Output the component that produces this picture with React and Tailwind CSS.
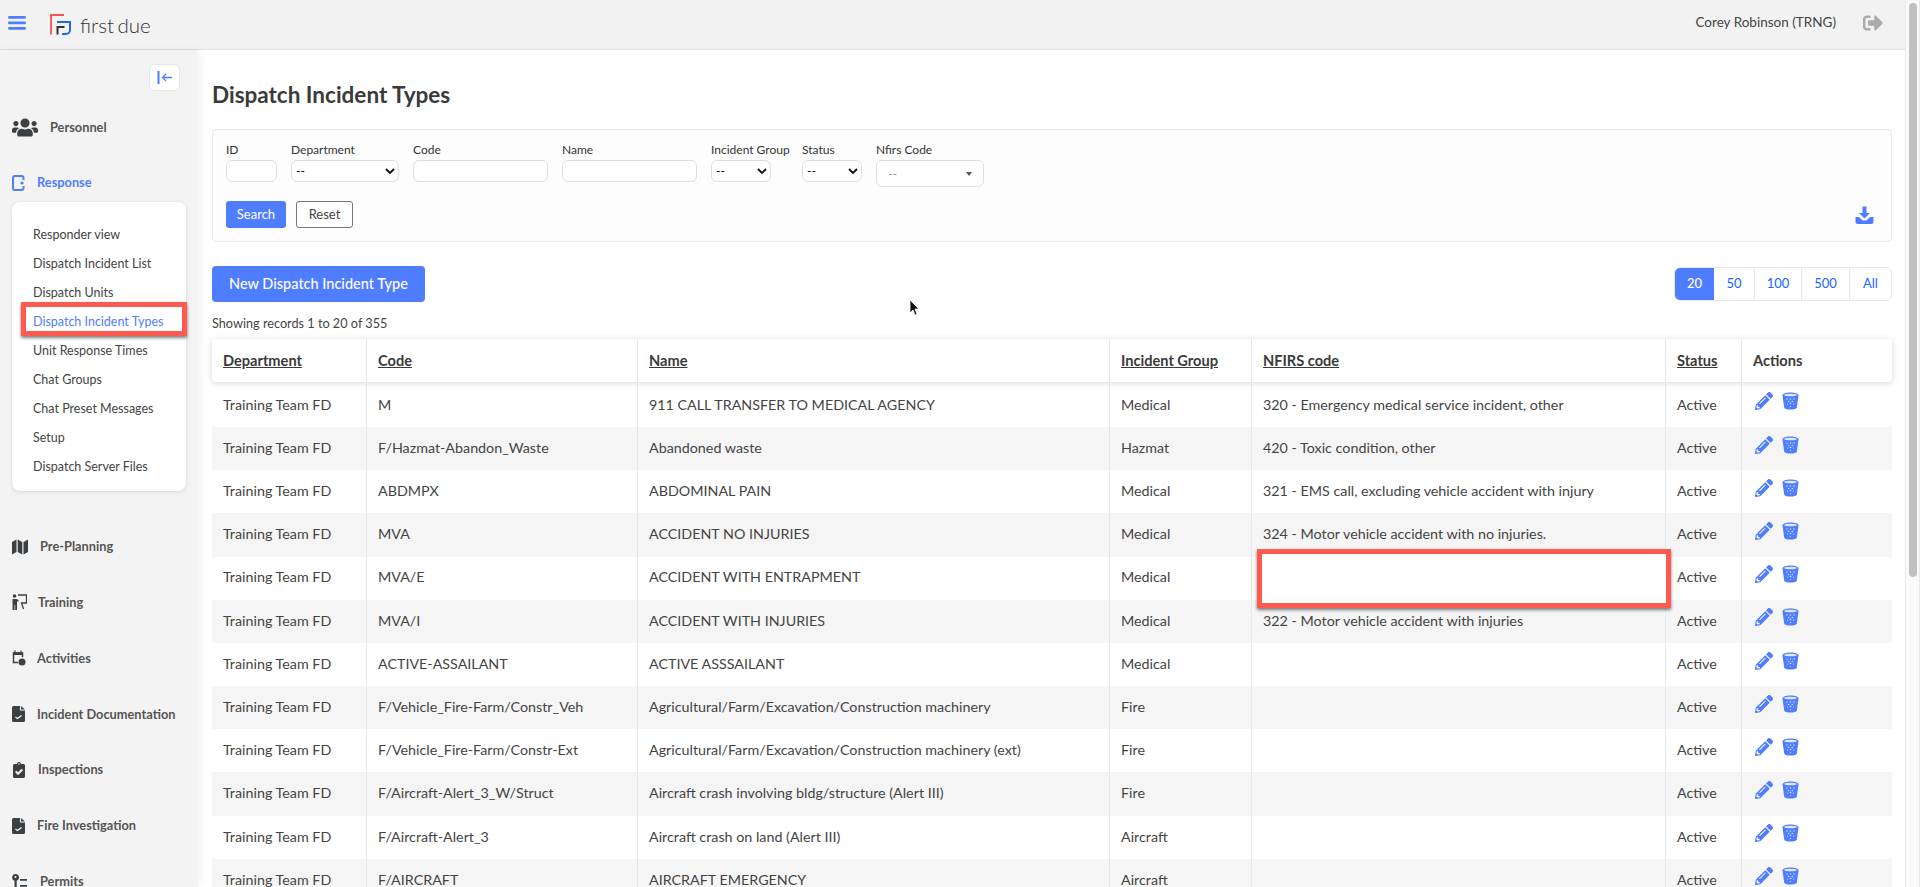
import { FaUsers, FaClipboardCheck, FaPencilAlt, FaSignOutAlt } from 'react-icons/fa';

const rows = [
  ['M', '911 CALL TRANSFER TO MEDICAL AGENCY', 'Medical', '320 - Emergency medical service incident, other'],
  ['F/Hazmat-Abandon_Waste', 'Abandoned waste', 'Hazmat', '420 - Toxic condition, other'],
  ['ABDMPX', 'ABDOMINAL PAIN', 'Medical', '321 - EMS call, excluding vehicle accident with injury'],
  ['MVA', 'ACCIDENT NO INJURIES', 'Medical', '324 - Motor vehicle accident with no injuries.'],
  ['MVA/E', 'ACCIDENT WITH ENTRAPMENT', 'Medical', ''],
  ['MVA/I', 'ACCIDENT WITH INJURIES', 'Medical', '322 - Motor vehicle accident with injuries'],
  ['ACTIVE-ASSAILANT', 'ACTIVE ASSSAILANT', 'Medical', ''],
  ['F/Vehicle_Fire-Farm/Constr_Veh', 'Agricultural/Farm/Excavation/Construction machinery', 'Fire', ''],
  ['F/Vehicle_Fire-Farm/Constr-Ext', 'Agricultural/Farm/Excavation/Construction machinery (ext)', 'Fire', ''],
  ['F/Aircraft-Alert_3_W/Struct', 'Aircraft crash involving bldg/structure (Alert III)', 'Fire', ''],
  ['F/Aircraft-Alert_3', 'Aircraft crash on land (Alert III)', 'Aircraft', ''],
  ['F/AIRCRAFT', 'AIRCRAFT EMERGENCY', 'Aircraft', ''],
];

const subItems = [
  'Responder view',
  'Dispatch Incident List',
  'Dispatch Units',
  'Dispatch Incident Types',
  'Unit Response Times',
  'Chat Groups',
  'Chat Preset Messages',
  'Setup',
  'Dispatch Server Files',
];

const columns = 'grid grid-cols-[155px_271px_472px_142px_414px_76px_150px]';

const Logo = () => (
  <svg width="21" height="21" viewBox="0 0 21 21" fill="none">
    <path d="M1 20.500V1h13" stroke="#f4525a" strokeWidth="1.800" />
    <path d="M7 8h13v8a4 4 0 0 1-4 4h-4" stroke="#2563eb" strokeWidth="2" />
    <path d="M7.500 20.500V13h7" stroke="#2f343b" strokeWidth="2" />
  </svg>
);

const MenuIcon = () => (
  <svg width="18" height="14" viewBox="0 0 18 14" fill="#4f7dff">
    <rect y="0" width="18" height="2.800" rx="1.400" />
    <rect y="5.500" width="18" height="2.800" rx="1.400" />
    <rect y="11" width="18" height="2.800" rx="1.400" />
  </svg>
);

const ResponseIcon = () => (
  <svg width="14" height="16" viewBox="0 0 14 16" fill="none">
    <rect x="1" y="1" width="10.500" height="14" rx="2" stroke="#4f7dff" strokeWidth="2" />
    <rect x="9" y="5" width="5" height="6" fill="#f3f3f3" />
    <circle cx="10" cy="8" r="1.600" fill="#4f7dff" />
  </svg>
);

const MapIcon = () => (
  <svg width="16" height="16" viewBox="0 0 16 16" fill="#3d4043">
    <path d="M0 3l4.500-2.500V13L0 15.500zM5.700 0.500L10.300 3v12.500L5.700 13zM11.500 3L16 0.500V13l-4.500 2.500z" />
  </svg>
);

const TrainingIcon = () => (
  <svg width="15" height="16" viewBox="0 0 15 16" fill="#3d4043">
    <circle cx="2.500" cy="2" r="1.800" />
    <path d="M0.500 5h4l2 1v1.500H5V16H3.200v-5H2.500v5H0.500z" />
    <path d="M6 1h8.500v8H9.500l2 6" fill="none" stroke="#3d4043" strokeWidth="1.300" />
  </svg>
);

const FileCheckIcon = () => (
  <svg width="13" height="16" viewBox="0 0 13 16">
    <path d="M1.500 0H8v4.500h5v10a1.500 1.500 0 0 1-1.500 1.500h-10A1.500 1.500 0 0 1 0 14.500V1.500A1.500 1.500 0 0 1 1.500 0zM9 0l4 3.500H9z" fill="#3d4043" />
    <path d="M3.500 11l2 1.500 4-3" stroke="#fff" strokeWidth="1.200" fill="none" />
  </svg>
);

const CalendarDotIcon = () => (
  <svg width="14" height="16" viewBox="0 0 14 16" fill="none">
    <path d="M6 12.500H1.500V3h9v4" stroke="#3d4043" strokeWidth="1.500" />
    <path d="M1 2.500h10V5H1z" fill="#3d4043" />
    <path d="M3 0.500v2M9 0.500v2" stroke="#3d4043" strokeWidth="1.300" />
    <circle cx="10" cy="12" r="3.500" fill="#3d4043" />
  </svg>
);

const PermitIcon = () => (
  <svg width="16" height="15" viewBox="0 0 16 15">
    <path d="M3.500 0a3.500 3.500 0 0 1 1.200 6.800V15H2.500V6.800A3.500 3.500 0 0 1 3.500 0z" fill="#3d4043" />
    <circle cx="3.500" cy="3" r="1" fill="#f3f3f3" />
    <path d="M8 5h7v1.800H8zM8 11h7v1.800H8z" fill="#3d4043" />
  </svg>
);

const TrashIcon = () => (
  <svg width="17" height="18" viewBox="0 0 17 18">
    <path d="M0.500 3.500C0.500 1.500 4 0.500 8.500 0.500s8 1 8 3l-1.700 12c-.2 1.400-3 2-6.300 2s-6.100-.6-6.300-2z" fill="#4f7dff" />
    <ellipse cx="8.500" cy="3" rx="6.300" ry="1.300" fill="#dfe7ff" />
    <g fill="#dfe7ff">
      <circle cx="5" cy="7" r=".7" /><circle cx="8.500" cy="7" r=".7" /><circle cx="12" cy="7" r=".7" />
      <circle cx="6.700" cy="9.500" r=".7" /><circle cx="10.300" cy="9.500" r=".7" />
      <circle cx="8.500" cy="11.500" r=".8" /><circle cx="5.500" cy="12" r=".6" /><circle cx="11.500" cy="12" r=".6" />
      <circle cx="8.500" cy="14.500" r=".6" />
    </g>
  </svg>
);

const DownloadIcon = () => (
  <svg width="19" height="19" viewBox="0 0 19 19" fill="#4f7dff">
    <path d="M7.500 0.500h4V7h3.500l-5.500 5.500L4 7h3.500z" />
    <path d="M0.500 11h3.300l4 3.500h3.400l4-3.500h3.300v4.500a2.500 2.500 0 0 1-2.500 2.500H3a2.500 2.500 0 0 1-2.500-2.500z" />
  </svg>
);

const SelectBox = ({ width }) => (
  <div className={`${width} h-[22px] flex items-center justify-between pl-[4px] pr-[3px] bg-white border border-[#dedede] rounded-[6px] text-[12px] text-black`}>
    <span>--</span>
    <svg width="10" height="7" viewBox="0 0 10 7" fill="none">
      <path d="M1 1l4 4 4-4" stroke="#111" strokeWidth="1.800" />
    </svg>
  </div>
);

const TextInput = ({ width }) => (
  <div className={`${width} h-[22px] bg-white border border-[#dedede] rounded-[6px]`} />
);

const Field = ({ label, width, children }) => (
  <div className={`flex flex-col ${width}`}>
    <label className="text-[12px] leading-[15px] mb-[3px] text-[#333] whitespace-nowrap">{label}</label>
    {children}
  </div>
);

const NavItem = ({ icon, label, active, gap }) => (
  <div className={`h-[55.850px] flex items-center pl-[12px] ${gap} text-[12.800px] font-bold ${active ? 'text-[#4f7dff]' : 'text-[#555]'}`}>
    {icon}
    <span>{label}</span>
  </div>
);

const App = () => {
  return (
    <div className="relative h-[887px] overflow-hidden flex bg-white text-[#3d3d3d] font-['Lato','Liberation_Sans',sans-serif]">
      <div className="flex-1 min-w-0 flex flex-col">
        <header className="h-[50px] shrink-0 flex items-center justify-between bg-[#f2f2f2] border-b border-[#e2e2e2]">
          <div className="flex items-center">
            <div className="ml-[8px] -mt-[3px] flex"><MenuIcon /></div>
            <div className="ml-[24px] flex"><Logo /></div>
            <span className="ml-[9px] mt-[1px] text-[20.500px] font-light text-[#2f343b] [word-spacing:-2px]">first due</span>
          </div>
          <div className="flex items-center -mt-[4px]">
            <span className="text-[13.500px] text-[#444]">Corey Robinson (TRNG)</span>
            <FaSignOutAlt className="ml-[27px] mr-[22px] w-[20px] h-[20px] text-[#aaaaaa]" />
          </div>
        </header>

        <div className="flex-1 min-h-0 flex">
          <aside className="w-[198px] shrink-0 bg-[#f3f3f3] shadow-[3px_0_8px_rgba(0,0,0,0.05)]">
            <div className="h-[41px] mb-[9px] flex items-end justify-end pr-[18px]">
              <div className="w-[31px] h-[27px] flex items-center justify-center bg-white border border-[#e6e6e6] rounded-[6px]">
                <svg width="16" height="13" viewBox="0 0 16 13" fill="none" stroke="#4f7dff">
                  <path d="M1.500 0v13" strokeWidth="2" />
                  <path d="M15 6.500H6M9 3L5.500 6.500 9 10" strokeWidth="1.300" />
                </svg>
              </div>
            </div>
            <NavItem icon={<FaUsers className="w-[26px] h-[21px] text-[#3d4043]" />} label="Personnel" gap="gap-[12px]" />
            <div className="-mt-[1px]">
              <NavItem icon={<ResponseIcon />} label="Response" active gap="gap-[11px]" />
            </div>
            <div className="mx-[12px] -mt-[9px] h-[289px] bg-white rounded-[8px] shadow-[0_1px_4px_rgba(0,0,0,0.12)] pt-[19px] pl-[21px]">
              {subItems.map((item, i) => (
                <div key={item} className={`h-[29px] flex items-center text-[12.500px] ${i === 3 ? 'text-[#4f7dff]' : 'text-[#444]'}`}>{item}</div>
              ))}
            </div>
            <div className="mt-[28px]">
              <NavItem icon={<MapIcon />} label="Pre-Planning" gap="gap-[12px]" />
              <NavItem icon={<TrainingIcon />} label="Training" gap="gap-[11px]" />
              <NavItem icon={<CalendarDotIcon />} label="Activities" gap="gap-[11px]" />
              <NavItem icon={<FileCheckIcon />} label="Incident Documentation" gap="gap-[12px]" />
              <NavItem icon={<FaClipboardCheck className="w-[14px] h-[16px] text-[#3d4043]" />} label="Inspections" gap="gap-[12px]" />
              <NavItem icon={<FileCheckIcon />} label="Fire Investigation" gap="gap-[12px]" />
              <NavItem icon={<PermitIcon />} label="Permits" gap="gap-[12px]" />
            </div>
          </aside>

          <main className="flex-1 min-w-0 pl-[14px] pr-[13px]">
            <h1 className="mt-[30px] h-[30px] leading-[30px] text-[22.500px] font-bold text-[#3a3a3a]">Dispatch Incident Types</h1>
            <div className="mt-[19px] h-[113px] relative bg-[#fdfdfd] border border-[#e8e8e8] rounded-[4px] pt-[12px] pl-[13px]">
              <div className="flex items-start gap-[14px]">
                <Field label="ID"><TextInput width="w-[51px]" /></Field>
                <Field label="Department"><SelectBox width="w-[108px]" /></Field>
                <Field label="Code"><TextInput width="w-[135px]" /></Field>
                <Field label="Name"><TextInput width="w-[135px]" /></Field>
                <Field label="Incident Group" width="w-[77px]"><SelectBox width="w-[60px]" /></Field>
                <Field label="Status"><SelectBox width="w-[60px]" /></Field>
                <Field label="Nfirs Code">
                  <div className="w-[108px] h-[27px] flex items-center justify-between px-[11px] bg-white border border-[#dedede] rounded-[6px] text-[12px] text-[#888]">
                    <span>--</span>
                    <span className="w-0 h-0 border-x-[3px] border-x-transparent border-t-[4px] border-t-[#555]" />
                  </div>
                </Field>
              </div>
              <div className="flex gap-[10px] mt-[14px]">
                <button className="w-[60px] h-[27px] bg-[#4f7dff] text-white text-[13px] rounded-[3px]">Search</button>
                <button className="w-[57px] h-[27px] bg-white border border-[#777] text-[#444] text-[13px] rounded-[3px]">Reset</button>
              </div>
              <div className="absolute right-[17px] bottom-[16px]"><DownloadIcon /></div>
            </div>

            <div className="mt-[24px] flex items-start justify-between">
              <button className="w-[213px] h-[36px] bg-[#4f7dff] text-white text-[14.500px] font-medium rounded-[4px]">New Dispatch Incident Type</button>
              <div className="flex h-[34px] mt-[1px] border border-[#e8e8e8] rounded-[6px] overflow-hidden text-[13px] text-[#1a66ff]">
                <div className="w-[39px] flex items-center justify-center bg-[#4f7dff] text-white font-medium">20</div>
                <div className="w-[41px] flex items-center justify-center border-r border-[#e8e8e8]">50</div>
                <div className="w-[47px] flex items-center justify-center border-r border-[#e8e8e8]">100</div>
                <div className="w-[48px] flex items-center justify-center border-r border-[#e8e8e8]">500</div>
                <div className="w-[41px] flex items-center justify-center">All</div>
              </div>
            </div>
            <div className="mt-[13px] h-[16px] leading-[16px] text-[12.700px] text-[#444]">Showing records 1 to 20 of 355</div>

            <div className="mt-[8px] w-[1680px] text-[14.300px] text-[#444]">
              <div className={`${columns} h-[43px] bg-white rounded-[4px] shadow-[0_1px_7px_rgba(0,0,0,0.16)] relative text-[14.600px] font-bold text-[#3a3a3a]`}>
                {['Department', 'Code', 'Name', 'Incident Group', 'NFIRS code', 'Status'].map((h) => (
                  <div key={h} className="pl-[11px] flex items-center border-r border-[#e8e8e8]"><span className="underline">{h}</span></div>
                ))}
                <div className="pl-[11px] flex items-center">Actions</div>
              </div>
              <div className="pt-[1.800px]">
                {rows.map((row, i) => (
                  <div key={row[0]} className={`${columns} h-[43.200px] ${i % 2 === 1 ? 'bg-[#f5f5f5]' : 'bg-white'}`}>
                    <div className="pl-[11px] pb-[2px] flex items-center border-r border-[#e8e8e8] whitespace-nowrap">Training Team FD</div>
                    {row.map((c, j) => (
                      <div key={j} className="pl-[11px] pb-[2px] flex items-center border-r border-[#e8e8e8] whitespace-nowrap">{c}</div>
                    ))}
                    <div className="pl-[11px] pb-[2px] flex items-center border-r border-[#e8e8e8]">Active</div>
                    <div className="pl-[13px] pb-[8px] flex items-center gap-[9px]">
                      <FaPencilAlt className="w-[18px] h-[18px] text-[#4f7dff]" />
                      <TrashIcon />
                    </div>
                  </div>
                ))}
              </div>
            </div>
          </main>
        </div>
      </div>

      <div className="w-[15px] shrink-0 bg-[#fafafa] border-x border-[#e8e8e8] pt-[3px] pl-[3px]">
        <div className="w-[8px] h-[574px] bg-[#c1c1c1] rounded-[4px]" />
      </div>

      {/* annotations drawn over the page */}
      <div className="absolute left-[21px] top-[302px] w-[166px] h-[34px] border-[5px] border-[#ff5a4f] shadow-[0_2px_3px_rgba(0,0,0,0.5)]" />
      <div className="absolute left-[1257px] top-[549px] w-[414px] h-[59px] border-[5px] border-[#ff5a4f] bg-white shadow-[0_2px_3px_rgba(0,0,0,0.5)]" />
      <svg className="absolute left-[909px] top-[299px]" width="11" height="17" viewBox="0 0 11 17">
        <path d="M1 1v13l3-3 2 5 2-1-2-5h4z" fill="#111" stroke="#fff" strokeWidth=".8" />
      </svg>
    </div>
  );
};

export default App;
